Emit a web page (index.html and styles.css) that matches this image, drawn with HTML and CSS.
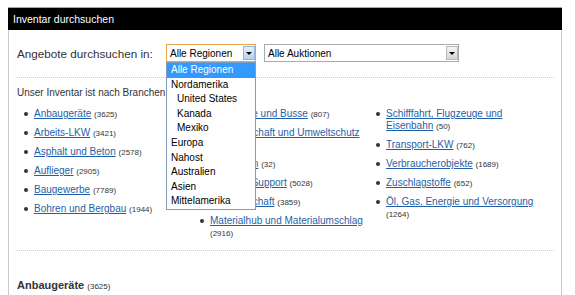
FILE: index.html
```html
<!doctype html>
<html lang="de">
<head>
    <meta charset="UTF-8">
    <title>Inventar durchsuchen</title>
    <link rel="stylesheet" href="styles.css">
</head>
<body>
<div class="panel">
    <div class="panelHead">Inventar durchsuchen</div>
    <div class="panelBody">
        <div class="searchRow">
            <span class="searchLabel">Angebote durchsuchen in:</span>
            <div class="select region focused">
                <span class="value">Alle Regionen</span>
                <span class="arrow"></span>
                <ul class="dropdown">
                    <li class="selected">Alle Regionen</li>
                    <li>Nordamerika</li>
                    <li class="sub">United States</li>
                    <li class="sub">Kanada</li>
                    <li class="sub">Mexiko</li>
                    <li>Europa</li>
                    <li>Nahost</li>
                    <li>Australien</li>
                    <li>Asien</li>
                    <li>Mittelamerika</li>
                </ul>
            </div>
            <div class="select auction">
                <span class="value">Alle Auktionen</span>
                <span class="arrow"></span>
            </div>
        </div>

        <p class="intro">Unser Inventar ist nach Branchen geordnet.</p>

        <div class="cats">
            <ul>
                <li><span class="item"><a href="#">Anbaugeräte</a> <small>(3625)</small></span></li>
                <li><span class="item"><a href="#">Arbeits-LKW</a> <small>(3421)</small></span></li>
                <li><span class="item"><a href="#">Asphalt und Beton</a> <small>(2578)</small></span></li>
                <li><span class="item"><a href="#">Auflieger</a> <small>(2905)</small></span></li>
                <li><span class="item"><a href="#">Baugewerbe</a> <small>(7789)</small></span></li>
                <li><span class="item"><a href="#">Bohren und Bergbau</a> <small>(1944)</small></span></li>
            </ul>
            <ul>
                <li><span class="item"><a href="#">Fahrzeuge und Busse</a> <small>(807)</small></span></li>
                <li><span class="item"><a href="#">Forstwirtschaft und Umweltschutz</a> <small>(640)</small></span></li>
                <li><span class="item"><a href="#">Immobilien</a> <small>(32)</small></span></li>
                <li><span class="item"><a href="#">Industrie-Support</a> <small>(5028)</small></span></li>
                <li><span class="item"><a href="#">Landwirtschaft</a> <small>(3859)</small></span></li>
                <li><span class="item"><a href="#">Materialhub und Materialumschlag</a> <small>(2916)</small></span></li>
            </ul>
            <ul>
                <li><span class="item"><a href="#">Schifffahrt, Flugzeuge und Eisenbahn</a> <small>(50)</small></span></li>
                <li><span class="item"><a href="#">Transport-LKW</a> <small>(762)</small></span></li>
                <li><span class="item"><a href="#">Verbraucherobjekte</a> <small>(1689)</small></span></li>
                <li><span class="item"><a href="#">Zuschlagstoffe</a> <small>(652)</small></span></li>
                <li><span class="item"><a href="#">Öl, Gas, Energie und Versorgung</a> <small>(1264)</small></span></li>
            </ul>
        </div>

        <h3 class="catTitle">Anbaugeräte <small>(3625)</small></h3>
    </div>
</div>
</body>
</html>
```

FILE: styles.css
```css
* {
    padding: 0;
    margin: 0;
    list-style: none;
}

body {
    margin: 7px 0 0 8px;
    font-family: "Liberation Sans", Arial, sans-serif;
    color: #333;
    background-color: #fff;
}

.panel {
    width: 554px;
    border-top: 1px solid #e09a50;
}

.panelHead {
    height: 22px;
    line-height: 22px;
    padding-left: 5px;
    background-color: #000;
    color: #fff;
    font-size: 10.5px;
}

.panelBody {
    border-left: 1px solid #c8c8c8;
    border-right: 1px solid #c8c8c8;
    padding: 0 7px 0 8px;
    height: 270px;
}

.searchRow {
    display: flex;
    align-items: center;
    padding: 14px 0 15px;
    border-bottom: 1px dotted #ccc;
}

.searchLabel {
    font-size: 11.7px;
    width: 149px;
    white-space: nowrap;
}

.select {
    position: relative;
    display: flex;
    align-items: center;
    height: 18px;
    box-sizing: border-box;
    border: 1px solid #a5acb2;
    font-size: 10px;
    color: #000;
    background-color: #fff;
}

.select .value {
    flex: 1;
    padding-left: 3px;
}

.select .arrow {
    width: 12px;
    height: 14px;
    box-sizing: border-box;
    border: 1px solid #b8b8b8;
    background: linear-gradient(#f6f6f6, #d4d4d4);
    display: flex;
    align-items: center;
    justify-content: center;
}

.select .arrow::after {
    content: "";
    border-left: 3px solid transparent;
    border-right: 3px solid transparent;
    border-top: 3px solid #000;
}

.region {
    width: 90px;
    margin-right: 8px;
}

.region.focused {
    border-color: #e8a54a;
}

.region.focused .arrow {
    border-color: #98b6da;
    background: linear-gradient(#e6f0fb, #b7d0ec);
}

.auction {
    width: 195px;
}

.dropdown {
    position: absolute;
    top: 17px;
    left: -1px;
    width: 90px;
    box-sizing: border-box;
    border: 1px solid #7f9db9;
    background-color: #fff;
    z-index: 2;
}

.dropdown li {
    height: 14.6px;
    line-height: 14.6px;
    padding-left: 4px;
}

.dropdown li.sub {
    padding-left: 10px;
}

.dropdown li.selected {
    background-color: #3399ff;
    color: #fff;
}

.intro {
    font-size: 10px;
    line-height: 12px;
    padding-top: 9px;
}

.cats {
    display: grid;
    grid-template-columns: repeat(3, 176px);
    padding: 9px 0 4px;
    border-bottom: 1px dotted #ccc;
    font-size: 10px;
    line-height: 12px;
}

.cats li {
    display: flex;
    margin-bottom: 6px;
}

.cats li::before {
    content: "";
    flex: none;
    width: 4px;
    height: 4px;
    border-radius: 50%;
    background-color: #333;
    margin: 4px 6px 0 7px;
}

.cats a {
    color: #1f5fa8;
}

.cats small,
.catTitle small {
    font-size: 8px;
    color: #333;
    font-weight: normal;
}

.catTitle {
    font-size: 11px;
    line-height: 14px;
    padding: 27px 0 5px;
    border-bottom: 1px dotted #ccc;
}
```
